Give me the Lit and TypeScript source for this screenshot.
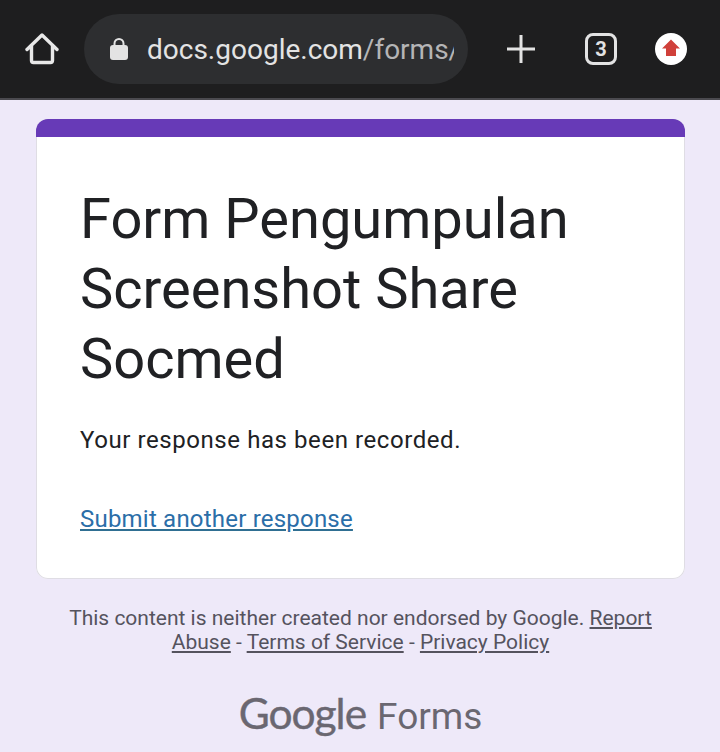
import { LitElement, html, css } from "lit";
import { customElement } from "lit/decorators.js";

@customElement("app-root")
export class AppRoot extends LitElement {
  static styles = css`
    :host {
      display: block;
      width: 720px;
      height: 752px;
      overflow: hidden;
      background: #eee9f9;
      font-family: Roboto, "Liberation Sans", sans-serif;
    }

    .toolbar {
      height: 98px;
      background: #1e1e1f;
      border-bottom: 2px solid #4b4a4f;
      display: flex;
      align-items: center;
    }

    .icon {
      display: block;
      flex: none;
    }

    .home {
      margin-left: 25px;
    }

    .omnibox {
      width: 384px;
      height: 70px;
      margin-left: 25px;
      padding-left: 26px;
      padding-right: 14px;
      box-sizing: border-box;
      border-radius: 35px;
      background: #2d2e30;
      display: flex;
      align-items: center;
    }

    .url {
      margin-left: 19px;
      flex: 1;
      overflow: hidden;
      white-space: nowrap;
      font-size: 28px;
      color: #e3e3e3;
    }

    .url span {
      color: #b5b5b6;
    }

    .plus {
      margin-left: 39px;
    }

    .tabs {
      margin-left: 50px;
      width: 32px;
      height: 32px;
      box-sizing: border-box;
      border: 3px solid #e3e3e3;
      border-radius: 8px;
      display: flex;
      align-items: center;
      justify-content: center;
      font-size: 20px;
      font-weight: 700;
      color: #e3e3e3;
    }

    .update {
      margin-left: 38px;
    }

    .page {
      padding: 19px 35px 0 36px;
    }

    .card {
      border-radius: 12px;
      overflow: hidden;
      background: #fff;
      box-shadow: inset 0 0 0 1px #dfdde4;
    }

    .band {
      height: 18px;
      background: #673ab7;
    }

    .content {
      padding: 47px 44px 42px;
    }

    h1 {
      margin: 0;
      font-size: 56px;
      line-height: 70px;
      font-weight: 400;
      color: #202124;
    }

    .message {
      margin-top: 28px;
      font-size: 24px;
      line-height: 36px;
      letter-spacing: 0.57px;
      color: #202124;
    }

    .again {
      display: inline-block;
      margin-top: 43px;
      font-size: 24px;
      line-height: 36px;
      letter-spacing: 0.21px;
      color: #2b6ea8;
      text-decoration: underline;
      text-decoration-color: #2f6f92;
    }

    .disclaimer {
      margin-top: 27px;
      padding: 0 28px;
      text-align: center;
      font-size: 21px;
      line-height: 24px;
      color: #55535e;
    }

    .disclaimer a {
      color: inherit;
      text-decoration: underline;
    }

    .brand {
      margin-top: 32px;
      display: flex;
      justify-content: center;
      align-items: baseline;
      gap: 11px;
      color: #6a6771;
    }

    .brand .google {
      font-family: Lato, sans-serif;
      font-size: 42.5px;
      line-height: 54px;
      letter-spacing: -1px;
      -webkit-text-stroke: 0.4px #6a6771;
    }

    .brand .forms {
      font-size: 37px;
      line-height: 54px;
    }
  `;

  render() {
    return html`
      <div class="toolbar">
        <svg class="icon home" width="34" height="34" viewBox="0 0 34 34">
          <path
            d="M2 17.500 17 3l15 14.500M6.500 14v14.500a2 2 0 0 0 2 2h17a2 2 0 0 0 2-2V14"
            fill="none"
            stroke="#e8e8e8"
            stroke-width="3.400"
            stroke-linecap="round"
            stroke-linejoin="round"
          />
        </svg>
        <div class="omnibox">
          <svg class="icon" width="18" height="24" viewBox="0 0 18 24">
            <path
              d="M4.500 10V6.500a4.500 4.500 0 0 1 9 0V10"
              fill="none"
              stroke="#e3e3e3"
              stroke-width="2"
            />
            <rect x="0" y="8" width="18" height="15" rx="3" fill="#e3e3e3" />
          </svg>
          <div class="url">docs.google.com<span>/forms/</span></div>
        </div>
        <svg class="icon plus" width="28" height="28" viewBox="0 0 28 28">
          <path d="M14 0v28M0 14h28" stroke="#e3e3e3" stroke-width="3" />
        </svg>
        <div class="tabs">3</div>
        <svg class="icon update" width="32" height="32" viewBox="0 0 32 32">
          <circle cx="16" cy="16" r="16" fill="#fff" />
          <path d="M16 6.500 25 15.500H21V23H11V15.500H7z" fill="#d0403a" />
        </svg>
      </div>
      <div class="page">
        <div class="card">
          <div class="band"></div>
          <div class="content">
            <h1>Form Pengumpulan Screenshot Share Socmed</h1>
            <div class="message">Your response has been recorded.</div>
            <a class="again">Submit another response</a>
          </div>
        </div>
        <div class="disclaimer">
          This content is neither created nor endorsed by Google.
          <a>Report Abuse</a> - <a>Terms of Service</a> - <a>Privacy Policy</a>
        </div>
        <div class="brand">
          <span class="google">Google</span>
          <span class="forms">Forms</span>
        </div>
      </div>
    `;
  }
}
